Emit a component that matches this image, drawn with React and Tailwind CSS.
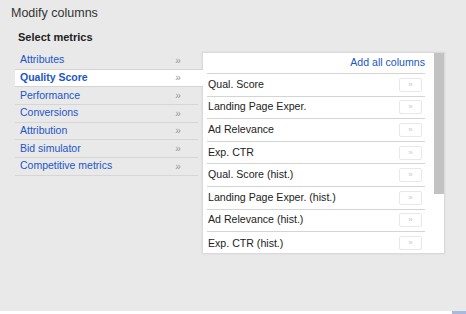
import React from "react";

const categories = [
  "Attributes",
  "Quality Score",
  "Performance",
  "Conversions",
  "Attribution",
  "Bid simulator",
  "Competitive metrics",
];

const columns = [
  "Qual. Score",
  "Landing Page Exper.",
  "Ad Relevance",
  "Exp. CTR",
  "Qual. Score (hist.)",
  "Landing Page Exper. (hist.)",
  "Ad Relevance (hist.)",
  "Exp. CTR (hist.)",
];

export default function App() {
  return (
    <div className="w-[466px] h-[314px] bg-white overflow-hidden font-['Liberation_Sans',Arial,sans-serif]">
      <div className="h-[311px] bg-[#e9e9e9] relative">
        <div className="pl-[11px] pt-[5px] text-[12.5px] leading-[16px] text-[#333]">Modify columns</div>
        <div className="pl-[18px] pt-[9px] text-[11px] leading-[14px] font-bold text-[#222]">Select metrics</div>

        <div className="flex mt-[8px]">
          <div className="ml-[15px] w-[187px]">
            {categories.map((c, i) => {
              const selected = i === 1;
              return (
                <div
                  key={c}
                  className={
                    selected
                      ? "h-[18.5px] -mt-px flex items-center bg-white border-t border-b border-[#d4d4d4] mr-[-1px] relative"
                      : "h-[17.7px] flex items-center border-b border-[#d6d6d6] mr-[4px]"
                  }
                >
                  <span
                    className={
                      "pl-[5px] text-[10.5px] text-[#2155c8] flex-1 " + (selected ? "font-bold" : "")
                    }
                  >
                    {c}
                  </span>
                  <span
                    className={
                      "w-[10px] text-[10px] text-[#999] text-center " + (selected ? "mr-[20px]" : "mr-[15px]")
                    }
                  >
                    »
                  </span>
                </div>
              );
            })}
          </div>

          <div className="w-[243px] h-[202px] bg-white border border-[#dadada] shadow-[0_0_2px_rgba(0,0,0,0.08)] flex">
            <div className="flex-1 pl-[4px] pr-[9px]">
              <div className="h-[21px] border-b border-[#d4d4d4] flex items-center justify-end text-[10.6px] text-[#2155c8]">
                Add all columns
              </div>
              {columns.map((c, i) => (
                <div
                  key={c}
                  className={
                    "h-[22.6px] flex items-center justify-between " +
                    (i < columns.length - 1 ? "border-b border-[#d4d4d4]" : "")
                  }
                >
                  <span className="pl-[1px] text-[10.6px] text-[#222]">{c}</span>
                  <span className="w-[23px] h-[14px] mr-[3px] border border-[#e8e8e8] rounded-[2px] flex items-center justify-center text-[8px] text-[#c8c8c8]">
                    »
                  </span>
                </div>
              ))}
            </div>
            <div className="w-[10px] bg-white">
              <div className="h-[141px] bg-[#c2c2c2]" />
            </div>
          </div>
        </div>
      </div>
      <div className="flex justify-end">
        <div className="w-[14px] h-[3px] bg-[#a9b9e6]" />
      </div>
    </div>
  );
}
